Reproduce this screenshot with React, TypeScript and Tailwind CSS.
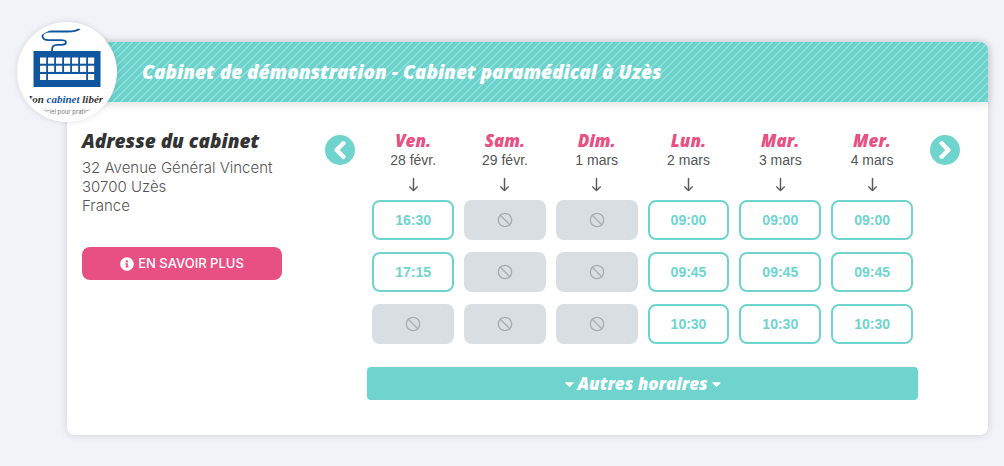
import { FaCaretDown, FaChevronLeft, FaChevronRight, FaInfoCircle } from 'react-icons/fa';
import { BsArrowDown } from 'react-icons/bs';
import { Ban } from 'lucide-react';
import clsx from 'clsx';

interface Day {
  label: string;
  date: string;
  slots: Array<string | null>;
}

const days: Day[] = [
  { label: 'Ven.', date: '28 févr.', slots: ['16:30', '17:15', null] },
  { label: 'Sam.', date: '29 févr.', slots: [null, null, null] },
  { label: 'Dim.', date: '1 mars', slots: [null, null, null] },
  { label: 'Lun.', date: '2 mars', slots: ['09:00', '09:45', '10:30'] },
  { label: 'Mar.', date: '3 mars', slots: ['09:00', '09:45', '10:30'] },
  { label: 'Mer.', date: '4 mars', slots: ['09:00', '09:45', '10:30'] },
];

const displayFont = "font-['Open_Sans',sans-serif] font-extrabold italic";

function Logo() {
  const keys = [0, 1, 2, 3, 4, 5, 6];

  return (
    <svg viewBox="22 27 90 90" className="h-full w-full rounded-full">
      <path
        d="M52 52V49.500Q52 45 57 44.800H61Q66 44.800 66 42.500Q66 40.200 61 40.200H49Q42.500 40.200 42.500 36Q42.500 31.500 50 31.500H68Q76 31.500 80 28.800"
        fill="none"
        stroke="#0f569f"
        strokeWidth="1.800"
      />
      <rect x="33.500" y="51" width="67" height="36" fill="#0f569f" />
      <g fill="#fff">
        {keys.map((k) => (
          <rect key={`a${k}`} x={40 + k * 8} y="57.500" width="6.200" height="6.200" />
        ))}
        {keys.map((k) => (
          <rect key={`b${k}`} x={40 + k * 8} y="65.700" width="6.200" height="6.200" />
        ))}
        <rect x="40" y="74" width="6.200" height="6" />
        <rect x="48" y="74" width="38.200" height="6" />
        <rect x="88" y="74" width="6.200" height="6" />
      </g>
      <text
        x="67"
        y="103"
        textAnchor="middle"
        className="font-['Liberation_Serif',serif] text-[11px] font-bold italic"
        fill="#333"
      >
        Mon <tspan fill="#0f569f">cabinet</tspan> libéral
      </text>
      <text
        x="67"
        y="114"
        textAnchor="middle"
        className="font-['Inter',sans-serif] text-[6px]"
        fill="#777"
      >
        Logiciel pour praticiens
      </text>
    </svg>
  );
}

function Slot({ time }: { time: string | null }) {
  return (
    <button
      type="button"
      disabled={!time}
      aria-label={time ? undefined : 'Indisponible'}
      className={clsx(
        'flex h-10 w-full items-center justify-center rounded-lg text-sm font-bold',
        time ? 'border-2 border-[#6fd4cd] bg-white text-[#6fd4cd]' : 'bg-[#d9dee2] text-[#a9adb0]'
      )}
    >
      {time ?? <Ban className="h-4 w-4" strokeWidth={2} />}
    </button>
  );
}

function DayColumn({ day }: { day: Day }) {
  return (
    <div className="flex flex-col items-center px-[5px] text-[#555]">
      <h3 className={clsx(displayFont, 'text-[17px] leading-5 text-[#e84f83]')}>{day.label}</h3>
      <p className="text-sm leading-[18px]">{day.date}</p>
      <BsArrowDown className="my-2 h-[15px] w-[15px] stroke-current stroke-[0.5]" />
      <div className="flex w-full flex-col gap-3">
        {day.slots.map((time, index) => (
          <Slot key={index} time={time} />
        ))}
      </div>
    </div>
  );
}

function NavButton({ direction }: { direction: 'prev' | 'next' }) {
  const Icon = direction === 'prev' ? FaChevronLeft : FaChevronRight;

  return (
    <div className="flex justify-center pt-1">
      <button
        type="button"
        aria-label={direction === 'prev' ? 'Jours précédents' : 'Jours suivants'}
        className="flex h-[30px] w-[30px] items-center justify-center rounded-full bg-[#6fd4cd] text-white"
      >
        <Icon className="h-5 w-5 stroke-current stroke-[30]" />
      </button>
    </div>
  );
}

export default function App() {
  return (
    <div className="min-h-screen bg-[#f2f3f9] pt-[42px] pr-4 pb-8 pl-[67px] font-['Liberation_Sans',sans-serif]">
      <article className="relative rounded-lg bg-white shadow-[0_0_8px_rgba(0,0,0,0.14)]">
        <header className="flex min-h-[60px] items-center rounded-t-lg bg-[#6bd3cb] bg-[linear-gradient(135deg,#93dfda_15%,transparent_15%,transparent_50%,#93dfda_50%,#93dfda_65%,transparent_65%)] bg-[length:8px_8px] pr-4 pl-[75px] shadow-[0_2px_10px_rgba(0,0,0,0.14)]">
          <h1 className={clsx(displayFont, 'text-[19px] leading-6 text-white')}>
            Cabinet de démonstration - Cabinet paramédical à Uzès
          </h1>
        </header>

        {/* Practice logo, overlapping the card corner */}
        <div className="absolute -top-5 -left-[50px] h-[100px] w-[100px] rounded-full bg-white p-[5px] shadow-[0_0_6px_rgba(0,0,0,0.12)]">
          <Logo />
        </div>

        <div className="flex pt-[29px] pb-[35px]">
          <section className="w-1/4 px-[15px] font-['Inter',sans-serif]">
            <h2 className={clsx(displayFont, 'text-[19px] leading-5 text-[#333]')}>
              Adresse du cabinet
            </h2>
            <address className="mt-[7px] text-[15px] leading-[19px] font-light text-[#555] not-italic">
              32 Avenue Général Vincent
              <br />
              30700 Uzès
              <br />
              France
            </address>
            <a
              href="#"
              className="mt-8 flex h-[33px] w-[200px] max-w-full items-center justify-center gap-1 rounded-lg bg-[#e84f83] text-[13px] font-medium text-white"
            >
              <FaInfoCircle className="h-[14px] w-[14px]" />
              EN SAVOIR PLUS
            </a>
          </section>

          <section className="grid w-3/4 grid-cols-12 px-[15px]">
            <NavButton direction="prev" />
            <div className="col-span-10">
              <div className="grid grid-cols-6">
                {days.map((day) => (
                  <DayColumn key={day.label} day={day} />
                ))}
              </div>
              <button
                type="button"
                className={clsx(
                  displayFont,
                  'mt-[23px] flex h-[33px] w-full items-center justify-center gap-1 rounded bg-[#6fd4cd] text-[17px] text-white'
                )}
              >
                <FaCaretDown className="h-4 w-[9px]" />
                Autres horaires
                <FaCaretDown className="h-4 w-[9px]" />
              </button>
            </div>
            <NavButton direction="next" />
          </section>
        </div>
      </article>
    </div>
  );
}
